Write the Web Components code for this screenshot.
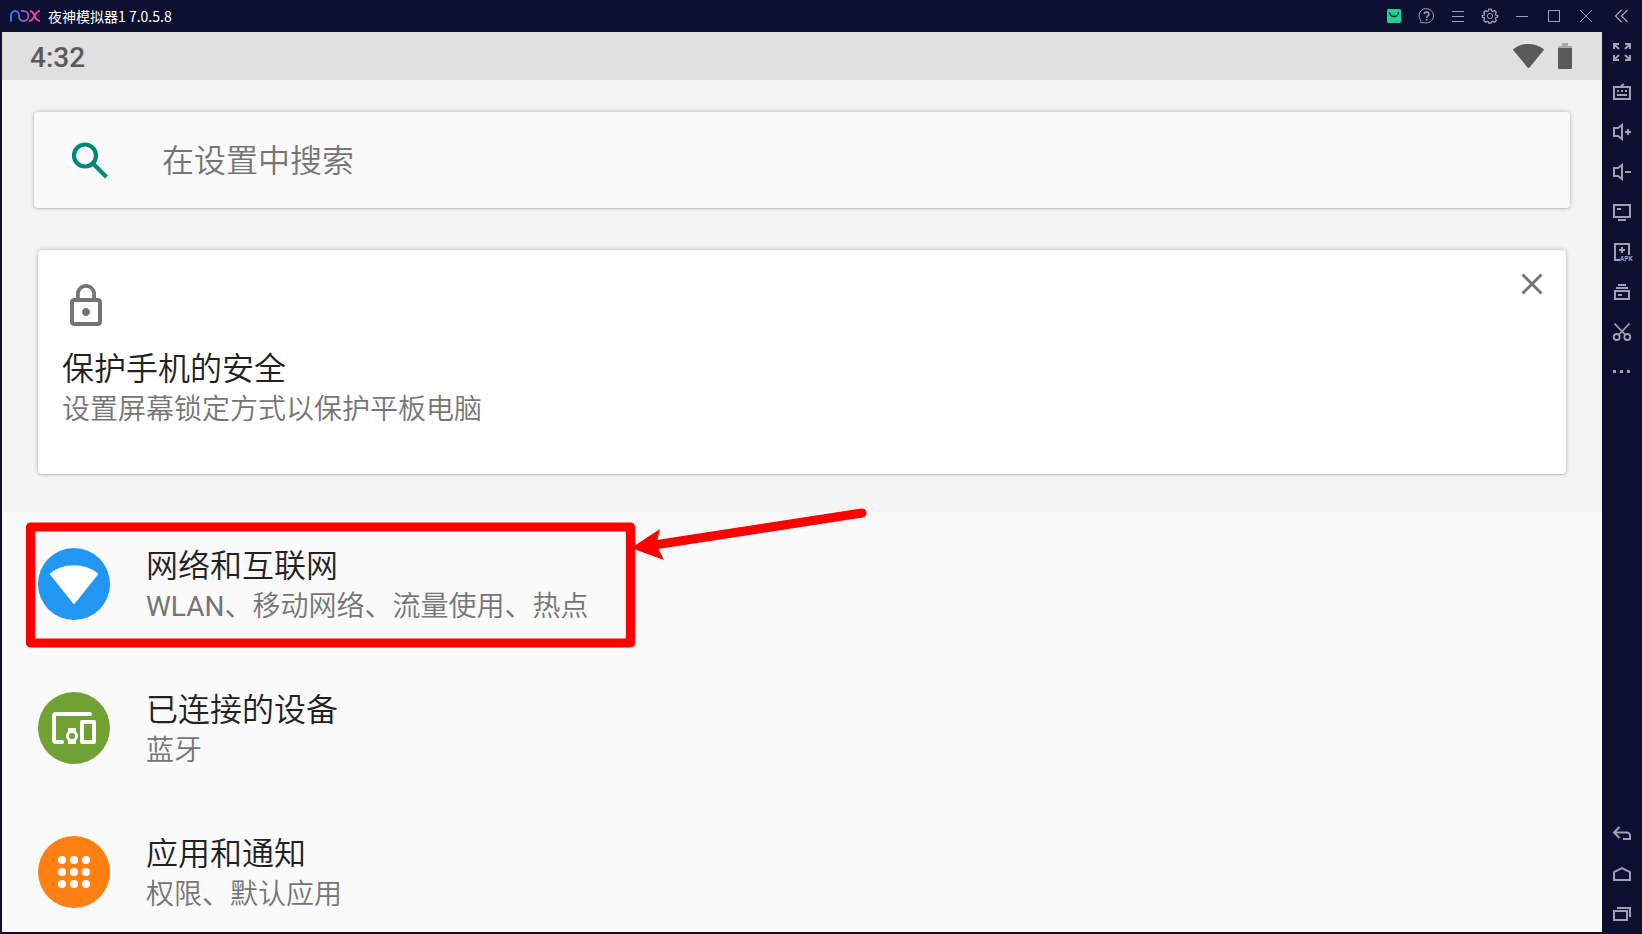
<!DOCTYPE html>
<html lang="zh-CN">
<head>
<meta charset="utf-8">
<title>夜神模拟器1 7.0.5.8</title>
<style>
html, body { height: 100%; margin: 0; }
body { overflow: hidden; background: #0c0f2f; font-family: Roboto, "Noto Sans CJK SC", sans-serif; }
.latin { font-weight: 400; }
</style>
</head>
<body>
<emulator-window>
  <title-bar slot="title" name="夜神模拟器1 7.0.5.8"></title-bar>
  <status-bar slot="screen" time="4:32"></status-bar>
  <settings-search slot="screen" hint="在设置中搜索"></settings-search>
  <suggestion-card slot="screen">
    <span slot="title">保护手机的安全</span>
    <span slot="summary">设置屏幕锁定方式以保护平板电脑</span>
  </suggestion-card>
  <settings-list slot="screen">
    <settings-item icon="wifi" color="#2196f3" marked>
      <span slot="title">网络和互联网</span>
      <span slot="summary"><span class="latin">WLAN</span>、移动网络、流量使用、热点</span>
    </settings-item>
    <settings-item icon="devices" color="#6fa233">
      <span slot="title">已连接的设备</span>
      <span slot="summary">蓝牙</span>
    </settings-item>
    <settings-item icon="apps" color="#ff7f11">
      <span slot="title">应用和通知</span>
      <span slot="summary">权限、默认应用</span>
    </settings-item>
  </settings-list>
  <side-bar slot="side"></side-bar>
</emulator-window>

<script>
const define = (name, render) => customElements.define(name, class extends HTMLElement {
  connectedCallback() {
    if (this.shadowRoot) return;
    this.attachShadow({ mode: 'open' }).innerHTML = render(this);
  }
});

const toolIcons = {
  shop: '<rect x="13" y="13" width="14" height="14" rx="1.5" fill="#24cf94" stroke="none"/><path d="M15.500 16c0 6 9 6 9 0" stroke="#0c3a4a" stroke-width="1.5"/>',
  help: '<path d="M15.500 26.700H14.200c1-.9.8-1.6.3-2.6A7.2 7.2 0 1 1 18 26.600z"/><path d="M18.300 18.200c0-3 4.600-3 4.600 0 0 1.700-2.300 1.600-2.300 3.600M20.600 23v1.500" stroke-width="1.5"/>',
  menu: '<path d="M14 15.5h12M14 20.5h12M14 25.5h12"/>',
  gear: '<path d="M18.800 13.200h2.400l.5 1.800 1.200.5 1.700-.9 1.700 1.700-.9 1.700.5 1.200 1.800.5v1.400l-1.800.5-.5 1.200.9 1.700-1.700 1.700-1.700-.9-1.200.5-.5 1.400h-2.400l-.5-1.400-1.200-.5-1.700.9-1.700-1.700.9-1.700-.5-1.200-1.800-.5v-1.400l1.800-.5.5-1.200-.9-1.700 1.700-1.700 1.700.9 1.200-.5z" stroke-width="1.3"/><circle cx="20" cy="20" r="2.600"/>',
  min: '<path d="M14 20.5h12"/>',
  max: '<rect x="14.500" y="14.500" width="11" height="11"/>',
  close: '<path d="M14 14l12 12M26 14L14 26"/>',
  fold: '<path d="M19.500 14l-6 6 6 6M25.500 14l-6 6 6 6" stroke-width="1.4"/>',
  expand: '<path d="M12 17v-5h5M12 12l5 5M23 12h5v5M28 12l-5 5M12 23v5h5M12 28l5-5M23 28h5v-5M28 28l-5-5" stroke-width="2"/>',
  keyboard: '<path d="M12 15h16v12H12zM19 14l3-2M15 19h2M19 19h2M23 19h2M15 23h10" stroke-width="2"/>',
  volup: '<path d="M20 13v14l-4-3h-4v-8h4zM23 20h6M26 17v6" stroke-width="2"/>',
  voldown: '<path d="M20 13v14l-4-3h-4v-8h4zM23 20h6" stroke-width="2"/>',
  screen: '<path d="M12 13h16v12H12zM15 17h4M16 28h8" stroke-width="2"/>',
  apk: '<path d="M18 28h-5V12h14v11M17 18h6M20 15v6" stroke-width="2"/><text x="18" y="29" font-family="Liberation Mono" font-weight="700" font-size="7" fill="#a0a2b2" stroke="none">APK</text>',
  stack: '<path d="M16 13h8M14 16h12M13 19h14v8H13zM16 23h4" stroke-width="2"/>',
  scissors: '<g stroke-width="1.8"><circle cx="14.700" cy="25" r="3"/><circle cx="25.300" cy="25" r="3"/><path d="M12.500 11.500l11 11.500M27.500 11.500L16.500 23"/></g>',
  more: '<path d="M11 19.500h3M18 19.500h3M25 19.500h3" stroke-width="3"/>',
  back: '<path d="M17.500 13L12 18.500l5.500 5.500M12 18.500h13a3 3 0 0 1 3 3V25h-7" stroke-width="2"/>',
  home: '<path d="M12 26v-8l8-4 8 4v8z" stroke-width="2"/>',
  recents: '<path d="M12 17h13v9H12zM15 14h13v9" stroke-width="2"/>'
};
const tool = (icon, label) =>
  `<button aria-label="${label}"><svg viewBox="0 0 40 40" width="40" height="40">${toolIcons[icon]}</svg></button>`;
const toolStyle = `
  button { display: flex; align-items: center; justify-content: center; padding: 0; border: 0; background: none; overflow: hidden; flex: none; }
  svg { fill: none; stroke: #a0a2b2; flex: none; display: block; }`;

define('emulator-window', () => `
  <style>
    :host { display: grid; grid-template: auto minmax(0, 1fr) / minmax(0, 1fr) auto; height: 100vh; background: #0c0f2f; }
    .title { grid-column: 1 / -1; }
    main { display: flex; flex-direction: column; margin: 0 0 2px 2px; background: #f4f4f4; overflow: hidden; }
    ::slotted(*) { flex: none; }
  </style>
  <div class="title"><slot name="title"></slot></div>
  <main><slot name="screen"></slot></main>
  <slot name="side"></slot>`);

define('title-bar', el => `
  <style>
    :host { display: flex; align-items: center; height: 32px; background: #0c0f2f; color: #fff; }
    .name { flex: 1; font-size: 14px; line-height: 20px; font-family: "Noto Sans CJK SC", sans-serif; }
    ${toolStyle}
    .logo { margin: 0 8px 0 10px; width: 30px; height: 12px; stroke: url(#nox); stroke-width: 2; }
    button { width: 32px; height: 32px; }
    button:last-child { width: 40px; }
  </style>
  <svg class="logo" viewBox="0 0 30 12" aria-hidden="true">
    <defs><linearGradient id="nox" gradientUnits="userSpaceOnUse" x1="0" y1="0" x2="30" y2="0">
      <stop offset="0" stop-color="#2f7bf6"/><stop offset=".5" stop-color="#8a56d8"/><stop offset=".75" stop-color="#e549a8"/><stop offset="1" stop-color="#f5318d"/>
    </linearGradient></defs>
    <path d="M1 11.500V5.500A4 4.500 0 0 1 9 5.500C9 9 10.500 11 13.500 11a4.800 4.900 0 0 0 0-10h-2.500M20 1c5 0 4 10 10 10M30 1c-6 0-5 10-11 10"/>
  </svg>
  <span class="name">${el.getAttribute('name')}</span>
  ${tool('shop', '应用中心')}${tool('help', '帮助')}${tool('menu', '菜单')}${tool('gear', '设置')}
  ${tool('min', '最小化')}${tool('max', '最大化')}${tool('close', '关闭')}${tool('fold', '收起')}`);

define('side-bar', () => `
  <style>
    :host { display: flex; flex-direction: column; width: 40px; }
    ${toolStyle}
    button { width: 40px; height: 40px; }
    .gap { flex: 1; }
  </style>
  ${tool('expand', '全屏')}${tool('keyboard', '按键设置')}${tool('volup', '音量加')}${tool('voldown', '音量减')}
  ${tool('screen', '虚拟定位')}${tool('apk', '安装应用')}${tool('stack', '多开')}${tool('scissors', '截图')}${tool('more', '更多')}
  <div class="gap"></div>
  ${tool('back', '返回')}${tool('home', '主页')}${tool('recents', '最近任务')}`);

define('status-bar', el => `
  <style>
    :host { display: flex; align-items: center; gap: 14px; height: 48px; padding: 0 30px 0 28px; background: #e0e0e0; color: #5a5a5a; }
    time { flex: 1; padding-top: 3px; font-size: 28px; line-height: 32px; font-weight: 500; }
    svg { fill: currentColor; display: block; }
  </style>
  <time>${el.getAttribute('time')}</time>
  <svg width="31" height="26" viewBox="0 0 31 26"><path d="M.4 7.200Q0 6.500.6 6C9-.8 22-.8 30.400 6q.6.500.2 1.200L16.500 24.400q-1 1-2 0z"/></svg>
  <svg width="14" height="26" viewBox="0 0 14 26"><path d="M4 0h6v3h3q1 0 1 1v1H0V4q0-1 1-1h3z" opacity=".4"/><path d="M0 5h14v20q0 1-1 1H1q-1 0-1-1z"/></svg>`);

define('settings-search', el => `
  <style>
    :host { display: block; padding: 32px; }
    label { display: flex; align-items: center; gap: 52px; box-sizing: border-box; height: 96px; padding: 2px 36px 0; border-radius: 4px; background: #fafafa;
      box-shadow: 0 0 4px rgba(0,0,0,.28), 0 1px 1px rgba(0,0,0,.08); }
    svg { flex: none; }
    input { flex: 1; min-width: 0; height: 48px; padding: 0; border: 0; outline: 0; background: none; font: 32px/48px Roboto, "Noto Sans CJK SC", sans-serif; font-weight: 350; color: #212121; }
    input::placeholder { color: #757575; opacity: 1; }
  </style>
  <label>
    <svg width="40" height="40" viewBox="0 0 40 40" fill="none" stroke="#00897b" stroke-width="4.200"><circle cx="15" cy="14.500" r="11"/><path d="M23 22.500L36.500 36"/></svg>
    <input type="text" aria-label="${el.getAttribute('hint')}" placeholder="${el.getAttribute('hint')}">
  </label>`);

define('suggestion-card', () => `
  <style>
    :host { display: block; padding: 10px 36px 38px; font-weight: 350; }
    article { display: flex; justify-content: space-between; align-items: flex-start; box-sizing: border-box; height: 224px; padding: 18px 18px 0 24px; border-radius: 4px; background: #fff;
      box-shadow: 0 0 4px rgba(0,0,0,.28), 0 1px 1px rgba(0,0,0,.08); }
    .lock { display: block; margin: 14px 0 19px; }
    h2 { margin: 0; font-size: 32px; line-height: 40px; font-weight: inherit; color: #212121; }
    p { margin: 0; font-size: 28px; line-height: 42px; color: #757575; }
    button { padding: 0; border: 0; background: none; width: 32px; height: 32px; }
    button svg { display: block; }
  </style>
  <article>
    <div>
      <svg class="lock" width="48" height="48" viewBox="0 0 24 24" fill="#757575"><path d="M12 17c1.100 0 2-.9 2-2s-.9-2-2-2-2 .9-2 2 .9 2 2 2zm6-9h-1V6c0-2.760-2.240-5-5-5S7 3.240 7 6v2H6c-1.100 0-2 .9-2 2v10c0 1.100.9 2 2 2h12c1.100 0 2-.9 2-2V10c0-1.100-.9-2-2-2zM8.900 6c0-1.710 1.390-3.100 3.100-3.100s3.100 1.390 3.100 3.100v2H8.900V6zM18 20H6V10h12v10z"/></svg>
      <h2><slot name="title"></slot></h2>
      <p><slot name="summary"></slot></p>
    </div>
    <button aria-label="关闭"><svg width="32" height="32" viewBox="0 0 32 32" stroke="#757575" stroke-width="2.900"><path d="M6.500 6.500l19 19M25.500 6.500l-19 19"/></svg></button>
  </article>`);

define('settings-list', () => `
  <style>:host { display: block; background: #fafafa; }</style>
  <slot></slot>`);

const itemIcons = {
  wifi: '<path d="M12 26.500q-.5-.6.200-1.200C25 14.500 47 14.500 59.800 25.300q.7.600.2 1.200L37 55.300q-1 1.200-2 0z" fill="#fff"/>',
  devices: '<path fill="none" stroke="#fff" stroke-width="4" stroke-linecap="round" stroke-linejoin="round" d="M52 22H18q-2 0-2 2v24q0 2 2 2h6M44 30h12v20H44z"/><path fill="#fff" d="M30 36h8v3.500a6 6 0 0 1 0 9V52h-8v-3.500a6 6 0 0 1 0-9z"/><circle cx="34" cy="44" r="3" fill="#6fa233"/>',
  apps: [24, 36, 48].map(y => [24, 36, 48].map(x => `<circle cx="${x}" cy="${y}" r="4" fill="#fff"/>`).join('')).join('')
};
define('settings-item', el => `
  <style>
    :host { display: block; position: relative; font-weight: 350; }
    a { display: flex; align-items: center; gap: 36px; height: 144px; padding: 0 36px; color: inherit; text-decoration: none; }
    .icon { flex: none; border-radius: 50%; background: ${el.getAttribute('color')}; }
    .text { padding-top: 6px; }
    .title { font-size: 32px; line-height: 40px; color: #212121; }
    .summary { font-size: 28px; line-height: 42px; color: #757575; }
    .mark { position: absolute; left: 20px; top: -12px; pointer-events: none; }
  </style>
  <a href="#">
    <svg class="icon" width="72" height="72" viewBox="0 0 72 72">${itemIcons[el.getAttribute('icon')]}</svg>
    <div class="text">
      <div class="title"><slot name="title"></slot></div>
      <div class="summary"><slot name="summary"></slot></div>
    </div>
  </a>
  ${el.hasAttribute('marked') ? `
  <svg class="mark" width="860" height="156" viewBox="0 0 860 156" aria-hidden="true">
    <rect x="8.500" y="27" width="600" height="116" fill="none" stroke="#f00" stroke-width="9.200" stroke-linejoin="round"/>
    <path d="M632 45L840 13" stroke="#f00" stroke-width="9" stroke-linecap="round"/>
    <path d="M609 48L638 29 635 41 637 50 642 60z" fill="#f00"/>
  </svg>` : ''}`);
</script>
</body>
</html>
